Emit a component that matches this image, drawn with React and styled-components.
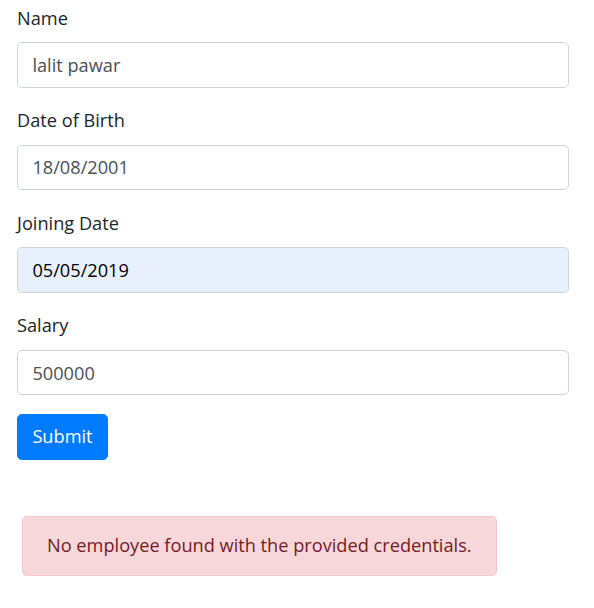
import React from 'react';
import styled, { createGlobalStyle } from 'styled-components';

const GlobalStyle = createGlobalStyle`
  body {
    margin: 0;
    background: #fff;
    font-family: "Open Sans", "Noto Sans", sans-serif;
    color: #212529;
  }
`;

const Page = styled.div`
  padding: 3.6px 25px 0 17px;
`;

const Form = styled.form`
  display: flex;
  flex-direction: column;
`;

const Group = styled.div`
  display: flex;
  flex-direction: column;
  margin-bottom: 18.6px;
`;

const Label = styled.label`
  font-size: 18.2px;
  line-height: 28.8px;
  margin-bottom: 9.6px;
  color: #212529;
`;

const Input = styled.input`
  box-sizing: border-box;
  height: 45.6px;
  width: 100%;
  padding: 7.2px 14.4px;
  font-family: inherit;
  font-size: 18.2px;
  line-height: 28.8px;
  color: ${({ $autofilled }) => ($autofilled ? '#000' : '#495057')};
  background: ${({ $autofilled }) => ($autofilled ? '#e8f0fe' : '#fff')};
  border: 1px solid #ced4da;
  border-radius: 4.8px;
  outline: none;
`;

const Button = styled.button`
  align-self: flex-start;
  box-sizing: border-box;
  height: 45.6px;
  padding: 7.2px 14.4px;
  font-family: inherit;
  font-size: 18.2px;
  line-height: 28.8px;
  color: #fff;
  background: #007bff;
  border: 1px solid #007bff;
  border-radius: 4.8px;
`;

const Alert = styled.div`
  box-sizing: border-box;
  width: 475px;
  height: 60px;
  margin: 56.6px 0 0 5px;
  padding: 14.4px 24px;
  font-size: 18.2px;
  line-height: 28.8px;
  color: #721c24;
  background: #f8d7da;
  border: 1px solid #f5c6cb;
  border-radius: 4.8px;
`;

const fields = [
  { label: 'Name', value: 'lalit pawar' },
  { label: 'Date of Birth', value: '18/08/2001' },
  { label: 'Joining Date', value: '05/05/2019', autofilled: true },
  { label: 'Salary', value: '500000' },
];

export default function App() {
  return (
    <Page>
      <GlobalStyle />
      <Form onSubmit={e => e.preventDefault()}>
        {fields.map(f => (
          <Group key={f.label}>
            <Label>{f.label}</Label>
            <Input defaultValue={f.value} $autofilled={f.autofilled} />
          </Group>
        ))}
        <Button type="submit">Submit</Button>
      </Form>
      <Alert>No employee found with the provided credentials.</Alert>
    </Page>
  );
}
